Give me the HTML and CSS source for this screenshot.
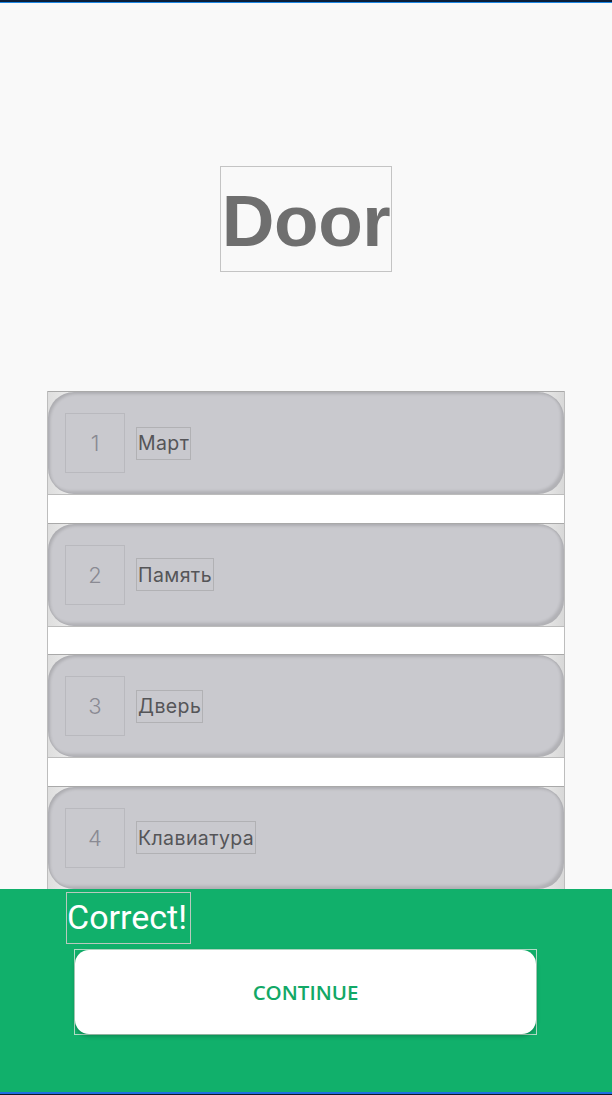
FILE: index.html
```html
<!DOCTYPE html>
<html lang="ru">
<head>
<meta charset="utf-8">
<link rel="stylesheet" href="styles.css">
</head>
<body>
<div class="screen">
  <div class="topbar"></div>
  <main class="stage">
    <div class="title-wrap"><h1 class="title">Door</h1></div>
    <div class="options">
      <div class="card"><div class="card-inner"><div class="num">1</div><div class="label">Март</div></div></div>
      <div class="card"><div class="card-inner"><div class="num">2</div><div class="label">Память</div></div></div>
      <div class="card"><div class="card-inner"><div class="num">3</div><div class="label">Дверь</div></div></div>
      <div class="card"><div class="card-inner"><div class="num">4</div><div class="label">Клавиатура</div></div></div>
    </div>
  </main>
  <section class="panel">
    <div class="result">Correct!</div>
    <div class="btn-frame"><button class="btn">CONTINUE</button></div>
  </section>
  <div class="bottombar"></div>
</div>
</body>
</html>
```
FILE: styles.css
```css
html, body { margin: 0; padding: 0; }
body { background: #f9f9f9; font-family: "Noto Sans", "Liberation Sans", sans-serif; }
.screen { width: 612px; height: 1095px; display: flex; flex-direction: column; overflow: hidden; }
.topbar { height: 3px; flex: none; background: linear-gradient(#0b1f3a 0 2px, #1e88e5 2px 3px); }
.bottombar { height: 3px; flex: none; background: linear-gradient(#1e6fe0 0 2px, #101828 2px 3px); }
.stage { flex: none; height: 886px; overflow: hidden; display: flex; flex-direction: column; align-items: center; }
.title-wrap { margin-top: 163px; display: flex; justify-content: center; }
.title { margin: 0; box-sizing: border-box; width: 172px; height: 106px; border: 1px solid #c4c4c4; display: flex; align-items: center; justify-content: center; font-family: "Liberation Sans", Arial, sans-serif; font-weight: 700; font-size: 73px; color: #6f6f6f; letter-spacing: -0.5px; padding-top: 2px; }
.options { margin-top: 119px; box-sizing: border-box; width: 518px; align-self: flex-start; margin-left: 47px; border-left: 1px solid #bdbdbd; border-right: 1px solid #bdbdbd; background: #fff; display: flex; flex-direction: column; gap: 27.5px; }
.card { box-sizing: border-box; height: 104px; flex: none; border-top: 1px solid #a9a9a9; border-bottom: 1px solid #bcbcbc; background: linear-gradient(90deg, #dedede, #f0f0f0 6%, #e2e2e4 50%, #f0f0f0 94%, #d8d8d8); }
.card-inner { height: 100%; box-sizing: border-box; border-radius: 26px; background: #c9c9ce; box-shadow: inset 2px 2px 3px rgba(0,0,0,0.14), inset -3px -3px 3px rgba(0,0,0,0.12); display: flex; align-items: center; padding-left: 17px; gap: 11px; }
.num { box-sizing: border-box; width: 60px; height: 60px; border: 1px solid #b9b9be; display: flex; align-items: center; justify-content: center; font-size: 22px; color: #8a8a93; font-family: Inter, "Noto Sans", sans-serif; font-weight: 300; }
.label { box-sizing: border-box; height: 33px; border: 1px solid #b1b1b4; padding: 0 1px; display: flex; align-items: center; font-size: 19.5px; letter-spacing: 0.4px; color: #555558; font-family: Inter, "Noto Sans", sans-serif; }
.panel { flex: none; height: 203px; background: #11b06b; box-sizing: border-box; padding-top: 3px; }
.result { box-sizing: border-box; margin-left: 66px; width: 125px; height: 52px; border: 1px solid #b9c9be; color: #fff; font-family: Roboto, sans-serif; font-size: 34px; line-height: 48px; white-space: nowrap; overflow: hidden; }
.btn-frame { margin: 5px 0 0 74px; width: 463px; height: 86px; box-sizing: border-box; border: 1px solid #b3dcc6; }
.btn { display: block; width: 100%; height: 100%; border: none; border-radius: 14px; background: #fff; box-shadow: 0 2px 4px rgba(0,0,0,0.25); color: #12a866; font-family: "Open Sans", sans-serif; font-weight: 600; font-size: 20.5px; padding: 0; cursor: pointer; }
```
